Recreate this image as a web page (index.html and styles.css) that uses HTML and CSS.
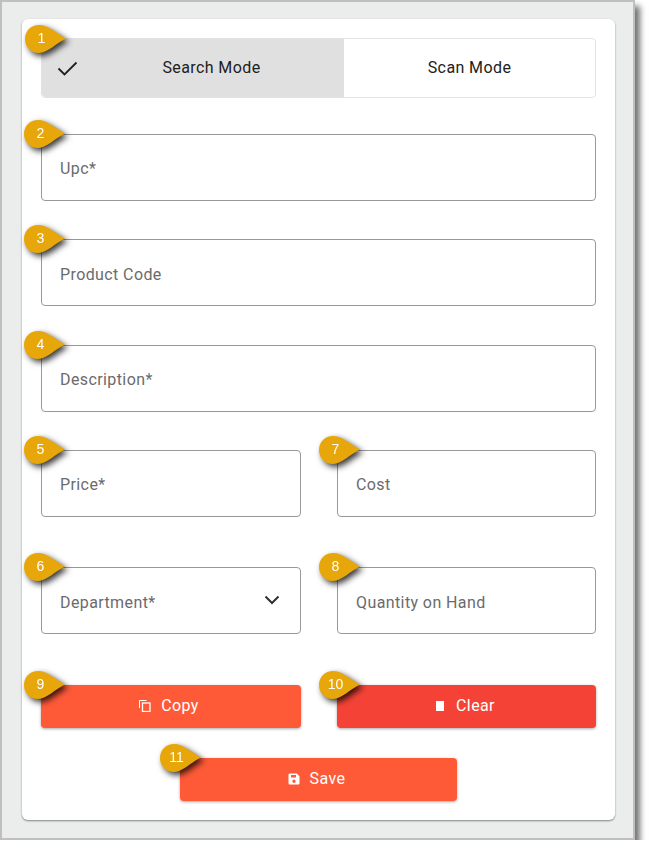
FILE: index.html
```html
<!DOCTYPE html>
<html lang="en">
<head>
  <meta charset="UTF-8">
  <meta name="viewport" content="width=device-width, initial-scale=1.0">
  <title>Product Form</title>
  <link rel="stylesheet" href="styles.css">
</head>

<body>
  <div class="frame">
    <form class="card">
      <div class="mode-toggle callout-host">
        <span class="callout"><span class="callout-shape">1</span></span>
        <button type="button" class="mode mode-active">
          <svg class="check" viewBox="0 0 24 24"><path d="M3.500 12.500l6 6L21.500 6.500" fill="none" stroke="#212121" stroke-width="1.800"/></svg>
          <span class="mode-text">Search Mode</span>
        </button>
        <button type="button" class="mode"><span class="mode-text">Scan Mode</span></button>
      </div>

      <div class="field callout-host row-upc">
        <span class="callout"><span class="callout-shape">2</span></span>
        <input type="text" placeholder="Upc*">
      </div>
      <div class="field field-low callout-host row-code">
        <span class="callout"><span class="callout-shape">3</span></span>
        <input type="text" placeholder="Product Code">
      </div>
      <div class="field callout-host row-desc">
        <span class="callout"><span class="callout-shape">4</span></span>
        <input type="text" placeholder="Description*">
      </div>

      <div class="two-col row-price">
        <div class="field callout-host">
          <span class="callout"><span class="callout-shape">5</span></span>
          <input type="text" placeholder="Price*">
        </div>
        <div class="field callout-host">
          <span class="callout"><span class="callout-shape">7</span></span>
          <input type="text" placeholder="Cost">
        </div>
      </div>

      <div class="two-col row-dept">
        <div class="field callout-host">
          <span class="callout"><span class="callout-shape">6</span></span>
          <div class="select-box">
            <span>Department*</span>
            <svg class="chevron" viewBox="0 0 16 10"><path d="M1.500 1.500L8 8l6.500-6.500" fill="none" stroke="#37302c" stroke-width="2"/></svg>
          </div>
        </div>
        <div class="field field-low callout-host">
          <span class="callout"><span class="callout-shape">8</span></span>
          <input type="text" placeholder="Quantity on Hand">
        </div>
      </div>

      <div class="two-col row-actions">
        <button type="button" class="btn btn-orange callout-host">
          <span class="callout"><span class="callout-shape">9</span></span>
          <svg class="btn-icon" viewBox="0 0 12 12"><path d="M0.500 8V0.500H7.500" fill="none" stroke="#fff"/><rect x="3.500" y="3" width="7.500" height="8.500" fill="none" stroke="#fff" stroke-width="1.300"/></svg>
          Copy
        </button>
        <button type="button" class="btn btn-red callout-host">
          <span class="callout"><span class="callout-shape">10</span></span>
          <svg class="btn-icon" viewBox="0 0 12 12"><rect x="2" y="1" width="8" height="10" fill="#fff"/></svg>
          Clear
        </button>
      </div>

      <div class="save-row">
        <button type="button" class="btn btn-orange btn-save callout-host">
          <span class="callout"><span class="callout-shape">11</span></span>
          <svg class="btn-icon" viewBox="0 0 12 12"><path d="M1.200 0.500h7.600L11.500 3.200V10.300a1.200 1.200 0 0 1-1.200 1.200H1.700a1.200 1.200 0 0 1-1.200-1.200V1.200zM3 2v2.600h5V2zM6 6.500a1.700 1.700 0 1 0 0 3.400a1.700 1.700 0 0 0 0-3.400z" fill="#fff" fill-rule="evenodd"/></svg>
          Save
        </button>
      </div>
    </form>
  </div>
</body>
</html>
```

FILE: styles.css
```css
* {
  box-sizing: border-box;
}

body {
  margin: 0;
  background: white;
  font-family: Roboto, "Liberation Sans", sans-serif;
  font-size: 16px;
  letter-spacing: 0.4px;
}

.frame {
  width: 635px;
  height: 840px;
  padding: 17px 18px 0 20px;
  background: #ebeded;
  border: 2px solid #bfbfbf;
  box-shadow: 5px 6px 6px rgba(0, 0, 0, 0.55);
}

.card {
  height: 801px;
  padding: 19px 19px 0;
  background: white;
  border-radius: 6px;
  box-shadow: 0 1px 2px rgba(0, 0, 0, 0.45);
}

.callout-host {
  position: relative;
}

.callout {
  position: absolute;
  left: -17px;
  top: -14px;
  z-index: 2;
  width: 41px;
  height: 28px;
  filter: drop-shadow(3px 3px 3px rgba(0, 0, 0, 0.8));
}

.two-col > :last-child > .callout {
  left: -18px;
}

.btn-save > .callout {
  left: -20px;
}

.callout-shape {
  display: block;
  height: 100%;
  padding-right: 8px;
  color: white;
  font-family: "Liberation Sans", Arial, sans-serif;
  font-size: 14px;
  font-weight: normal;
  letter-spacing: 0;
  line-height: 27px;
  text-align: center;
  background: #e7a70a;
  clip-path: path("M14 0C23 0 31 8 41 13.500C31 18 23 28 14 28C6 28 0 22 0 14C0 6 6 0 14 0Z");
}

.mode-toggle {
  display: flex;
  height: 60px;
  border: 1px solid #e2e2e2;
  border-radius: 4px;
}

.mode {
  display: flex;
  align-items: center;
  flex: 1;
  padding: 0;
  color: #212121;
  font: inherit;
  letter-spacing: inherit;
  background: white;
  border: none;
  border-radius: 0 4px 4px 0;
}

.mode-active {
  flex: none;
  width: 302px;
  padding-left: 13px;
  background: #e0e0e0;
  border-radius: 4px 0 0 4px;
}

.check {
  width: 24px;
  height: 24px;
}

.mode-text {
  flex: 1;
  padding-bottom: 2px;
  text-align: center;
}

.field input,
.select-box {
  display: flex;
  align-items: center;
  width: 100%;
  height: 67px;
  padding: 2px 18px 0;
  color: #6b6b6b;
  font: inherit;
  letter-spacing: inherit;
  background: white;
  border: 1px solid #999;
  border-radius: 4px;
}

.field input::placeholder {
  color: #6b6b6b;
  opacity: 1;
}

.field-low input {
  padding-top: 4px;
}

.select-box {
  justify-content: space-between;
  padding-right: 20px;
  padding-top: 4px;
}

.chevron {
  width: 16px;
  height: 10px;
  margin-top: -5px;
}

.two-col {
  display: grid;
  grid-template-columns: 260px 259px;
  column-gap: 36px;
}

.row-upc { margin-top: 36px; }
.row-code { margin-top: 38px; }
.row-desc { margin-top: 39px; }
.row-price { margin-top: 38px; }
.row-dept { margin-top: 50px; }
.row-actions { margin-top: 51px; }

.btn {
  display: flex;
  align-items: center;
  justify-content: center;
  gap: 10px;
  height: 43px;
  padding: 0 4px 2px 0;
  color: white;
  font: inherit;
  font-weight: 450;
  letter-spacing: 0.4px;
  border: none;
  border-radius: 4px;
  box-shadow: 0 1px 3px rgba(0, 0, 0, 0.35);
}

.btn-orange {
  background: #ff5a38;
}

.btn-red {
  background: #f44336;
}

.btn-icon {
  width: 12px;
  height: 12px;
}

.save-row {
  display: flex;
  justify-content: center;
  margin-top: 30px;
}

.btn-save {
  width: 277px;
}
```
